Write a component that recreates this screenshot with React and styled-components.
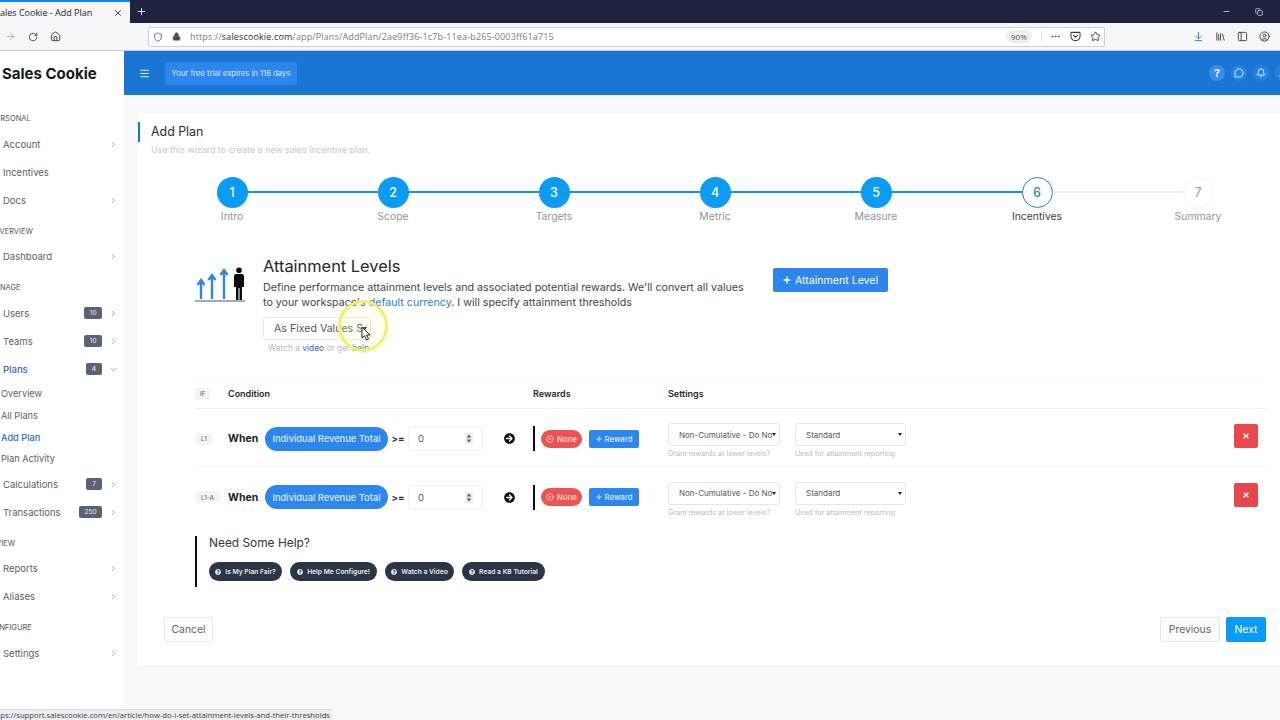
import styled, { createGlobalStyle } from 'styled-components';
import {
  ArrowRight, RotateCw, Home, Lock, Shield, MoreHorizontal, Star, Library, PanelLeft, CircleUser,
  Minus, Copy, X, Plus, ChevronRight, ChevronDown, CircleX, Menu, MessageCircle, Bell, ArrowDownToLine, User,
} from 'lucide-react';
import { FaArrowCircleRight, FaQuestionCircle, FaTimes, FaPlus } from 'react-icons/fa';

const GlobalStyle = createGlobalStyle`
  html, body { margin: 0; padding: 0; background: #f7f9fb; }
  * { box-sizing: border-box; }
`;

const Page = styled.div`
  width: 1280px;
  height: 720px;
  overflow: hidden;
  position: relative;
  display: flex;
  flex-direction: column;
  font-family: Inter, "Liberation Sans", sans-serif;
`;

/* browser chrome */
const TabStrip = styled.div`
  height: 23px;
  background: #1f2340;
  display: flex;
  align-items: stretch;
  color: #e8e9ee;
`;
const Tab = styled.div`
  width: 130px;
  background: #f6f6f8;
  border-top: 2px solid #0a84ff;
  color: #222;
  font: 9px "Open Sans", sans-serif;
  display: flex;
  align-items: center;
  justify-content: space-between;
  padding-right: 7px;
  overflow: hidden;
  span { margin-left: -5px; white-space: nowrap; }
`;
const NewTab = styled.div`
  width: 22px;
  display: flex;
  align-items: center;
  justify-content: center;
`;
const WinControls = styled.div`
  margin-left: auto;
  display: flex;
  align-items: center;
  gap: 24px;
  padding-right: 17px;
`;
const NavBar = styled.div`
  height: 28px;
  background: #f6f6f8;
  border-bottom: 1px solid #c9ccd2;
  display: flex;
  align-items: center;
  color: #3c3c44;
  padding-left: 5px;
`;
const NavIcons = styled.div`
  width: 143px;
  display: flex;
  align-items: center;
  gap: 12px;
`;
const UrlBar = styled.div`
  width: 957px;
  height: 20px;
  background: #fff;
  border: 1px solid #d0d0d4;
  border-radius: 2px;
  display: flex;
  align-items: center;
  padding: 0 3px 0 4px;
  gap: 9px;
  font: 9px "Open Sans", sans-serif;
  color: #7b7b83;
  letter-spacing: 0.14px;
  b { font-weight: 400; color: #2c2c33; }
`;
const ZoomBadge = styled.span`
  margin-left: auto;
  font-size: 8px;
  background: #eeeef0;
  border-radius: 8px;
  padding: 1px 5px;
  color: #555;
`;
const UrlActions = styled.div`
  display: flex;
  align-items: center;
  gap: 9px;
  padding-left: 8px;
  border-left: 1px solid #e4e4e7;
  color: #3c3c44;
`;
const ToolIcons = styled.div`
  display: flex;
  align-items: center;
  gap: 11px;
  margin-left: 88px;
`;

/* app shell */
const Shell = styled.div`
  flex: 1;
  display: flex;
  min-height: 0;
`;
const Sidebar = styled.aside`
  width: 124px;
  background: #fff;
  flex-shrink: 0;
  color: #5e6066;
  font-size: 9.5px;
`;
const Brand = styled.div`
  height: 44px;
  display: flex;
  align-items: center;
  padding-left: 2px;
  font-size: 15px;
  font-weight: 700;
  color: #17181c;
  margin-bottom: 13px;
`;
const SideLabel = styled.div`
  height: 20px;
  line-height: 21px;
  margin: 6.5px 0 2px;
  font-size: 7.5px;
  color: #54565c;
  text-transform: uppercase;
  white-space: nowrap;
  text-indent: ${(p) => p.$cut}px;
`;
const SideItem = styled.div`
  height: 28px;
  display: flex;
  align-items: center;
  padding: 0 6px 0 3px;
  color: ${(p) => (p.$active ? '#2d6cc0' : '#5e6066')};
  font-weight: ${(p) => (p.$active ? 500 : 400)};
`;
const SideBadge = styled.span`
  margin-left: auto;
  margin-right: 7px;
  height: 12px;
  min-width: 16px;
  padding: 0 5.5px;
  border-radius: 2px;
  background: #5b6275;
  color: #eee;
  font-size: 6.5px;
  display: flex;
  align-items: center;
  justify-content: center;
`;
const SideArrow = styled.span`
  display: flex;
  margin-left: ${(p) => (p.$push ? 'auto' : '0')};
  color: #8b8d93;
`;
const SubItem = styled.div`
  height: 21.75px;
  line-height: 22px;
  padding-left: 1px;
  font-size: 9.2px;
  color: ${(p) => (p.$active ? '#2d6cc0' : '#5e6066')};
  font-weight: ${(p) => (p.$active ? 500 : 400)};
`;
const Main = styled.main`
  flex: 1;
  min-width: 0;
  display: flex;
  flex-direction: column;
`;
const TopBar = styled.header`
  height: 44px;
  background: #1976d2;
  display: flex;
  align-items: center;
  padding-left: 15px;
  color: #fff;
  overflow: hidden;
`;
const TrialBadge = styled.div`
  margin-left: 15px;
  height: 23px;
  width: 132px;
  background: #2d86ee;
  border-radius: 3px;
  font-size: 7.7px;
  color: #dbe9fb;
  display: flex;
  align-items: center;
  justify-content: center;
  white-space: nowrap;
`;
const TopIcons = styled.div`
  margin-left: auto;
  margin-right: -11px;
  display: flex;
  gap: 6px;
`;
const TopIcon = styled.span`
  width: 16px;
  height: 16px;
  border-radius: 50%;
  background: ${(p) => (p.$strong ? '#3a8cf0' : '#2680e2')};
  font-size: 11px;
  font-weight: 600;
  display: flex;
  align-items: center;
  justify-content: center;
`;
const Content = styled.div`
  flex: 1;
  background: #f7f9fb;
  padding: 19px 0 0 14px;
`;
const Card = styled.section`
  background: #fff;
  padding: 8px 14px 23px 0;
`;
const TitleBar = styled.h1`
  margin: 0;
  height: 20px;
  line-height: 19px;
  border-left: 2px solid #1976d2;
  padding-left: 11px;
  font-size: 12.4px;
  font-weight: 400;
  color: #2a2c31;
`;
const Subtitle = styled.p`
  margin: 0;
  height: 16px;
  line-height: 16px;
  padding-left: 13px;
  font-size: 8.9px;
  color: #c4c7cc;
`;

/* wizard */
const Stepper = styled.ol`
  list-style: none;
  margin: 19px 0 0 13.5px;
  padding: 0;
  display: grid;
  grid-template-columns: repeat(7, 161px);
`;
const Step = styled.li`
  position: relative;
  display: flex;
  flex-direction: column;
  align-items: center;
  &:not(:last-child)::after {
    content: '';
    position: absolute;
    left: 50%;
    top: 14px;
    width: 161px;
    height: 2px;
    background: ${(p) => (p.$lineDone ? '#0f96e8' : '#eff2f4')};
  }
`;
const Circle = styled.span`
  position: relative;
  z-index: 1;
  width: 31px;
  height: 31px;
  border-radius: 50%;
  display: flex;
  align-items: center;
  justify-content: center;
  font-size: 12.5px;
  font-weight: 500;
  background: ${(p) => (p.$state === 'done' ? '#0a9bf5' : '#fff')};
  color: ${(p) => (p.$state === 'done' ? '#fff' : p.$state === 'current' ? '#1e88c9' : '#a4a6aa')};
  border: ${(p) => (p.$state === 'current' ? '1px solid #1e88c9' : p.$state === 'todo' ? '1px solid #f2f3f5' : 'none')};
`;
const StepLabel = styled.span`
  margin-top: 2px;
  font-size: 10.4px;
  line-height: 13px;
  color: ${(p) => (p.$state === 'current' ? '#3b3d42' : '#93959a')};
`;

/* attainment intro */
const Intro = styled.div`
  margin: 32px 0 0 57px;
  display: flex;
  align-items: flex-start;
`;
const IntroIcon = styled.svg`
  margin-top: 12px;
  margin-right: 18px;
  flex-shrink: 0;
`;
const IntroText = styled.div`
  width: 510px;
`;
const Heading = styled.h2`
  margin: 0;
  height: 20px;
  line-height: 23px;
  font-size: 16.4px;
  font-weight: 400;
  color: #26282c;
`;
const Lead = styled.p`
  margin: 5px 0 0;
  width: 490px;
  font-size: 10.7px;
  line-height: 15px;
  color: #43454a;
  a { color: #2d7dd2; }
`;
const SelectBox = styled.div`
  position: relative;
  width: ${(p) => p.$w}px;
  height: 23px;
  flex-shrink: 0;
  border: 1px solid #e6e8ec;
  border-radius: 3px;
  background: #fff;
  display: flex;
  align-items: center;
  padding-left: ${(p) => p.$pad}px;
  padding-right: 3px;
  font-size: ${(p) => p.$size}px;
  color: #55575c;
  white-space: nowrap;
  overflow: visible;
`;
const Caret = styled.span`
  margin-left: auto;
  width: 0;
  height: 0;
  border-left: 2.5px solid transparent;
  border-right: 2.5px solid transparent;
  border-top: 3.5px solid #222;
`;
const FixedSelect = styled(SelectBox)`
  margin-top: 7px;
`;
const Ring = styled.span`
  position: absolute;
  left: 74px;
  top: -18px;
  width: 50px;
  height: 52px;
  border-radius: 50%;
  border: 3px solid #f1f06a;
  background: rgba(250, 250, 190, 0.18);
  pointer-events: none;
`;
const Pointer = styled.svg`
  position: absolute;
  left: 97px;
  top: 8px;
`;
const Note = styled.div`
  margin-top: 3px;
  padding-left: 5px;
  font-size: 8.4px;
  line-height: 11px;
  color: #b6b9be;
  a { color: #2d6cc0; }
`;
const AddLevel = styled.button`
  margin: 13px 0 0;
  width: 115px;
  height: 24px;
  border: 0;
  border-radius: 2px;
  background: #2d86ee;
  color: #fff;
  font: 10.6px Inter, sans-serif;
  display: flex;
  align-items: center;
  justify-content: center;
  gap: 4px;
  padding: 0;
`;

/* levels table */
const Table = styled.div`
  margin: 26px 0 0 57px;
  border-top: 1px solid #f7f8f9;
`;
const HeadRow = styled.div`
  height: 28px;
  display: grid;
  grid-template-columns: 33px 305px 135px 1fr;
  align-items: center;
  border-bottom: 1px solid #f0f1f3;
  font-size: 9px;
  font-weight: 600;
  color: #26282c;
  padding-bottom: 2px;
`;
const Row = styled.div`
  height: 58px;
  padding-top: 2px;
  display: grid;
  grid-template-columns: 33px 305px 135px 1fr;
  align-items: center;
  border-bottom: ${(p) => (p.$last ? 'none' : '1px solid #f2f3f5')};
`;
const LevelTag = styled.span`
  justify-self: start;
  height: 12px;
  padding: 0 ${(p) => (p.$head ? 5 : 6)}px;
  border-radius: 3px;
  background: #f3f4f6;
  color: #6a6c71;
  font-size: 6.2px;
  font-weight: 500;
  display: flex;
  align-items: center;
`;
const Condition = styled.div`
  display: flex;
  align-items: center;
`;
const When = styled.span`
  width: 37px;
  font-size: 10.5px;
  font-weight: 700;
  color: #1e2024;
`;
const MetricPill = styled.span`
  width: 123px;
  height: 24px;
  border-radius: 12px;
  background: #2d86ee;
  color: #dce9fb;
  font-size: 9.3px;
  font-weight: 500;
  display: flex;
  align-items: center;
  justify-content: center;
  white-space: nowrap;
`;
const Operator = styled.span`
  width: 20px;
  text-align: center;
  font-size: 9.5px;
  font-weight: 700;
  color: #2b2d31;
`;
const NumberBox = styled.div`
  width: 75px;
  height: 24px;
  border: 1px solid #eff0f2;
  border-radius: 2px;
  padding: 0 9px 0 9px;
  display: flex;
  align-items: center;
  justify-content: space-between;
  font-size: 9.5px;
  color: #55575c;
`;
const Spinner = styled.svg`
  display: block;
`;
const GoIcon = styled.span`
  margin-left: 21px;
  display: flex;
  color: #0b0b0d;
`;
const Rewards = styled.div`
  display: flex;
  align-items: center;
  gap: 7px;
  border-left: 2px solid #0d0d10;
  height: 25px;
  padding-left: 6px;
`;
const NonePill = styled.span`
  width: 41px;
  height: 18px;
  border-radius: 9px;
  background: #eb5454;
  color: #fbdcdc;
  font-size: 7.8px;
  font-weight: 500;
  display: flex;
  align-items: center;
  justify-content: center;
  gap: 3px;
`;
const RewardButton = styled.button`
  width: 50px;
  height: 18px;
  border: 0;
  border-radius: 2px;
  background: #2d86ee;
  color: #dce9fb;
  font: 500 7.8px Inter, sans-serif;
  display: flex;
  align-items: center;
  justify-content: center;
  gap: 3px;
  padding: 0;
`;
const Settings = styled.div`
  display: flex;
  align-items: flex-start;
  padding-top: 5px;
`;
const SettingField = styled.div`
  width: 127px;
`;
const Hint = styled.div`
  margin-top: 3px;
  font-size: 7.2px;
  line-height: 10px;
  color: #b9bcc1;
  white-space: nowrap;
`;
const DeleteButton = styled.button`
  margin: 1px 8px 0 auto;
  width: 24px;
  height: 24px;
  border: 0;
  border-radius: 2px;
  background: #e9474b;
  color: #fff;
  display: flex;
  align-items: center;
  justify-content: center;
  padding: 0;
`;

/* help + footer */
const HelpBlock = styled.div`
  margin: 11px 0 0 57px;
  height: 51px;
  border-left: 2px solid #111;
  padding-left: 12px;
`;
const HelpTitle = styled.div`
  font-size: 11.9px;
  line-height: 14px;
  color: #33353a;
`;
const Chips = styled.div`
  margin-top: 12px;
  display: flex;
  gap: 8px;
`;
const Chip = styled.span`
  width: ${(p) => p.$w}px;
  height: 19px;
  border-radius: 10px;
  background: #2b3548;
  color: #e9ebef;
  font-size: 6.7px;
  font-weight: 600;
  display: flex;
  align-items: center;
  justify-content: center;
  gap: 4px;
  white-space: nowrap;
`;
const Footer = styled.div`
  margin: 30px 0 0 26px;
  display: flex;
  gap: 6px;
`;
const GhostButton = styled.button`
  height: 25px;
  width: ${(p) => p.$w}px;
  margin-right: ${(p) => (p.$spread ? 'auto' : '0')};
  background: ${(p) => (p.$flat ? '#fbfbfc' : '#fff')};
  border: 1px solid #e6e8eb;
  border-radius: 2px;
  color: #63656a;
  font: 10.4px Inter, sans-serif;
  padding: 0;
`;
const NextButton = styled.button`
  height: 25px;
  width: 40px;
  background: #0a9bf5;
  border: 0;
  border-radius: 2px;
  color: #fff;
  font: 10.4px Inter, sans-serif;
  padding: 0;
`;
const StatusLink = styled.div`
  position: absolute;
  left: 0;
  bottom: 0;
  width: 333px;
  height: 11px;
  background: #eceef0;
  border-top: 1px solid #dcdde0;
  font: 7.7px/10px "Open Sans", sans-serif;
  color: #3c3c44;
  white-space: nowrap;
  overflow: hidden;
  text-indent: -10px;
`;

const steps = ['Intro', 'Scope', 'Targets', 'Metric', 'Measure', 'Incentives', 'Summary'];
const chips = [
  { label: 'Is My Plan Fair?', w: 73 },
  { label: 'Help Me Configure!', w: 87 },
  { label: 'Watch a Video', w: 69 },
  { label: 'Read a KB Tutorial', w: 83 },
];

const stepState = (i) => (i < 5 ? 'done' : i === 5 ? 'current' : 'todo');

const SideRow = ({ label, badge, open, active }) => (
  <SideItem $active={active}>
    {label}
    {badge && <SideBadge>{badge}</SideBadge>}
    <SideArrow $push={!badge}>
      {open ? <ChevronDown size={9} /> : <ChevronRight size={9} />}
    </SideArrow>
  </SideItem>
);

const LevelRow = ({ tag, last }) => (
  <Row $last={last}>
    <LevelTag>{tag}</LevelTag>
    <Condition>
      <When>When</When>
      <MetricPill>Individual Revenue Total</MetricPill>
      <Operator>&gt;=</Operator>
      <NumberBox>
        0
        <Spinner width="8" height="11" viewBox="0 0 8 11">
          <rect width="8" height="11" fill="#eceded" />
          <path d="M4 1.500 6.200 4.500H1.800zM4 9.500 1.800 6.500H6.200z" fill="#55575c" />
        </Spinner>
      </NumberBox>
      <GoIcon><FaArrowCircleRight size={11} /></GoIcon>
    </Condition>
    <Rewards>
      <NonePill><CircleX size={8} />None</NonePill>
      <RewardButton><FaPlus size={6} />Reward</RewardButton>
    </Rewards>
    <Settings>
      <SettingField>
        <SelectBox $w={112} $pad={10} $size={8}>Non-Cumulative - Do No<Caret /></SelectBox>
        <Hint>Grant rewards at lower levels?</Hint>
      </SettingField>
      <SettingField>
        <SelectBox $w={111} $pad={10} $size={8}>Standard<Caret /></SelectBox>
        <Hint>Used for attainment reporting</Hint>
      </SettingField>
      <DeleteButton><FaTimes size={8} /></DeleteButton>
    </Settings>
  </Row>
);

export default function App() {
  return (
    <Page>
      <GlobalStyle />
      <TabStrip>
        <Tab><span>Sales Cookie - Add Plan</span><X size={10} /></Tab>
        <NewTab><Plus size={11} /></NewTab>
        <WinControls>
          <Minus size={9} />
          <Copy size={8} />
        </WinControls>
      </TabStrip>
      <NavBar>
        <NavIcons>
          <ArrowRight size={11} color="#a8a8ae" />
          <RotateCw size={10} />
          <Home size={11} />
        </NavIcons>
        <UrlBar>
          <Shield size={10} color="#4b47b8" />
          <Lock size={9} fill="#444" />
          <span>https://<b>salescookie.com</b>/app/Plans/AddPlan/2ae9ff36-1c7b-11ea-b265-0003ff61a715</span>
          <ZoomBadge>90%</ZoomBadge>
          <UrlActions>
            <MoreHorizontal size={11} />
            <svg width="11" height="11" viewBox="0 0 12 12" fill="none" stroke="currentColor" strokeWidth="1.100">
              <path d="M1 2.500Q1 1.500 2 1.500H10Q11 1.500 11 2.500V5.500A5 5 0 0 1 1 5.500Z" />
              <path d="M3.800 4.700 6 6.800 8.200 4.700" strokeLinecap="round" />
            </svg>
            <Star size={11} />
          </UrlActions>
        </UrlBar>
        <ToolIcons>
          <ArrowDownToLine size={11} color="#1f7fd6" />
          <Library size={11} />
          <PanelLeft size={11} />
          <CircleUser size={11} />
        </ToolIcons>
      </NavBar>
      <Shell>
        <Sidebar>
          <Brand>Sales Cookie</Brand>
          <SideLabel $cut={-9}>Personal</SideLabel>
          <SideRow label="Account" />
          <SideItem>Incentives</SideItem>
          <SideRow label="Docs" />
          <SideLabel $cut={-6}>Overview</SideLabel>
          <SideRow label="Dashboard" />
          <SideLabel $cut={-12}>Manage</SideLabel>
          <SideRow label="Users" badge="10" />
          <SideRow label="Teams" badge="10" />
          <SideRow label="Plans" badge="4" open active />
          <div>
            <SubItem>Overview</SubItem>
            <SubItem>All Plans</SubItem>
            <SubItem $active>Add Plan</SubItem>
            <SubItem>Plan Activity</SubItem>
          </div>
          <SideRow label="Calculations" badge="7" />
          <SideRow label="Transactions" badge="250" />
          <SideLabel $cut={-4}>View</SideLabel>
          <SideRow label="Reports" />
          <SideRow label="Aliases" />
          <SideLabel $cut={-12}>Configure</SideLabel>
          <SideRow label="Settings" />
        </Sidebar>
        <Main>
          <TopBar>
            <Menu size={11} />
            <TrialBadge>Your free trial expires in 116 days</TrialBadge>
            <TopIcons>
              <TopIcon $strong>?</TopIcon>
              <TopIcon><MessageCircle size={10} /></TopIcon>
              <TopIcon><Bell size={10} /></TopIcon>
              <TopIcon><User size={10} /></TopIcon>
            </TopIcons>
          </TopBar>
          <Content>
            <Card>
              <TitleBar>Add Plan</TitleBar>
              <Subtitle>Use this wizard to create a new sales incentive plan.</Subtitle>
              <Stepper>
                {steps.map((label, i) => (
                  <Step key={label} $lineDone={i < 5}>
                    <Circle $state={stepState(i)}>{i + 1}</Circle>
                    <StepLabel $state={stepState(i)}>{label}</StepLabel>
                  </Step>
                ))}
              </Stepper>
              <Intro>
                <IntroIcon width="50" height="35" viewBox="0 0 50 35">
                  <path d="M6 32V15M2.500 18 6 13l3.500 5M17 32V10M13.500 13 17 8l3.500 5M29 32V5M25.500 8 29 3l3.500 5" fill="none" stroke="#2f86e6" strokeWidth="2.400" />
                  <circle cx="44" cy="3.200" r="2.800" fill="#0c0c0f" />
                  <path d="M40 7h8l1 2v11h-2v13h-2.500V21h-1v12H41V20h-2V9z" fill="#0c0c0f" />
                  <path d="M0 34h50" stroke="#55575c" strokeWidth="1.200" />
                </IntroIcon>
                <IntroText>
                  <Heading>Attainment Levels</Heading>
                  <Lead>
                    Define performance attainment levels and associated potential rewards. We'll convert all values
                    to your workspace's <a>default currency</a>. I will specify attainment thresholds
                  </Lead>
                  <FixedSelect $w={108} $pad={10} $size={10.6}>
                    As Fixed Values S<Caret />
                    <Ring />
                    <Pointer width="10" height="15" viewBox="0 0 10 15">
                      <path d="M1 1v11l2.500-2.300L5.500 14l2-1-2-4H9z" fill="#fff" stroke="#111" strokeWidth="0.900" />
                    </Pointer>
                  </FixedSelect>
                  <Note>Watch a <a>video</a> or get <a>help</a></Note>
                </IntroText>
                <AddLevel><FaPlus size={8} />Attainment Level</AddLevel>
              </Intro>
              <Table>
                <HeadRow>
                  <LevelTag $head>IF</LevelTag>
                  <span>Condition</span>
                  <span>Rewards</span>
                  <span>Settings</span>
                </HeadRow>
                <LevelRow tag="L1" />
                <LevelRow tag="L1-A" last />
              </Table>
              <HelpBlock>
                <HelpTitle>Need Some Help?</HelpTitle>
                <Chips>
                  {chips.map((chip) => (
                    <Chip key={chip.label} $w={chip.w}><FaQuestionCircle size={6} />{chip.label}</Chip>
                  ))}
                </Chips>
              </HelpBlock>
              <Footer>
                <GhostButton $w={49} $spread>Cancel</GhostButton>
                <GhostButton $w={60} $flat>Previous</GhostButton>
                <NextButton>Next</NextButton>
              </Footer>
            </Card>
          </Content>
        </Main>
      </Shell>
      <StatusLink>https://support.salescookie.com/en/article/how-do-i-set-attainment-levels-and-their-thresholds</StatusLink>
    </Page>
  );
}
